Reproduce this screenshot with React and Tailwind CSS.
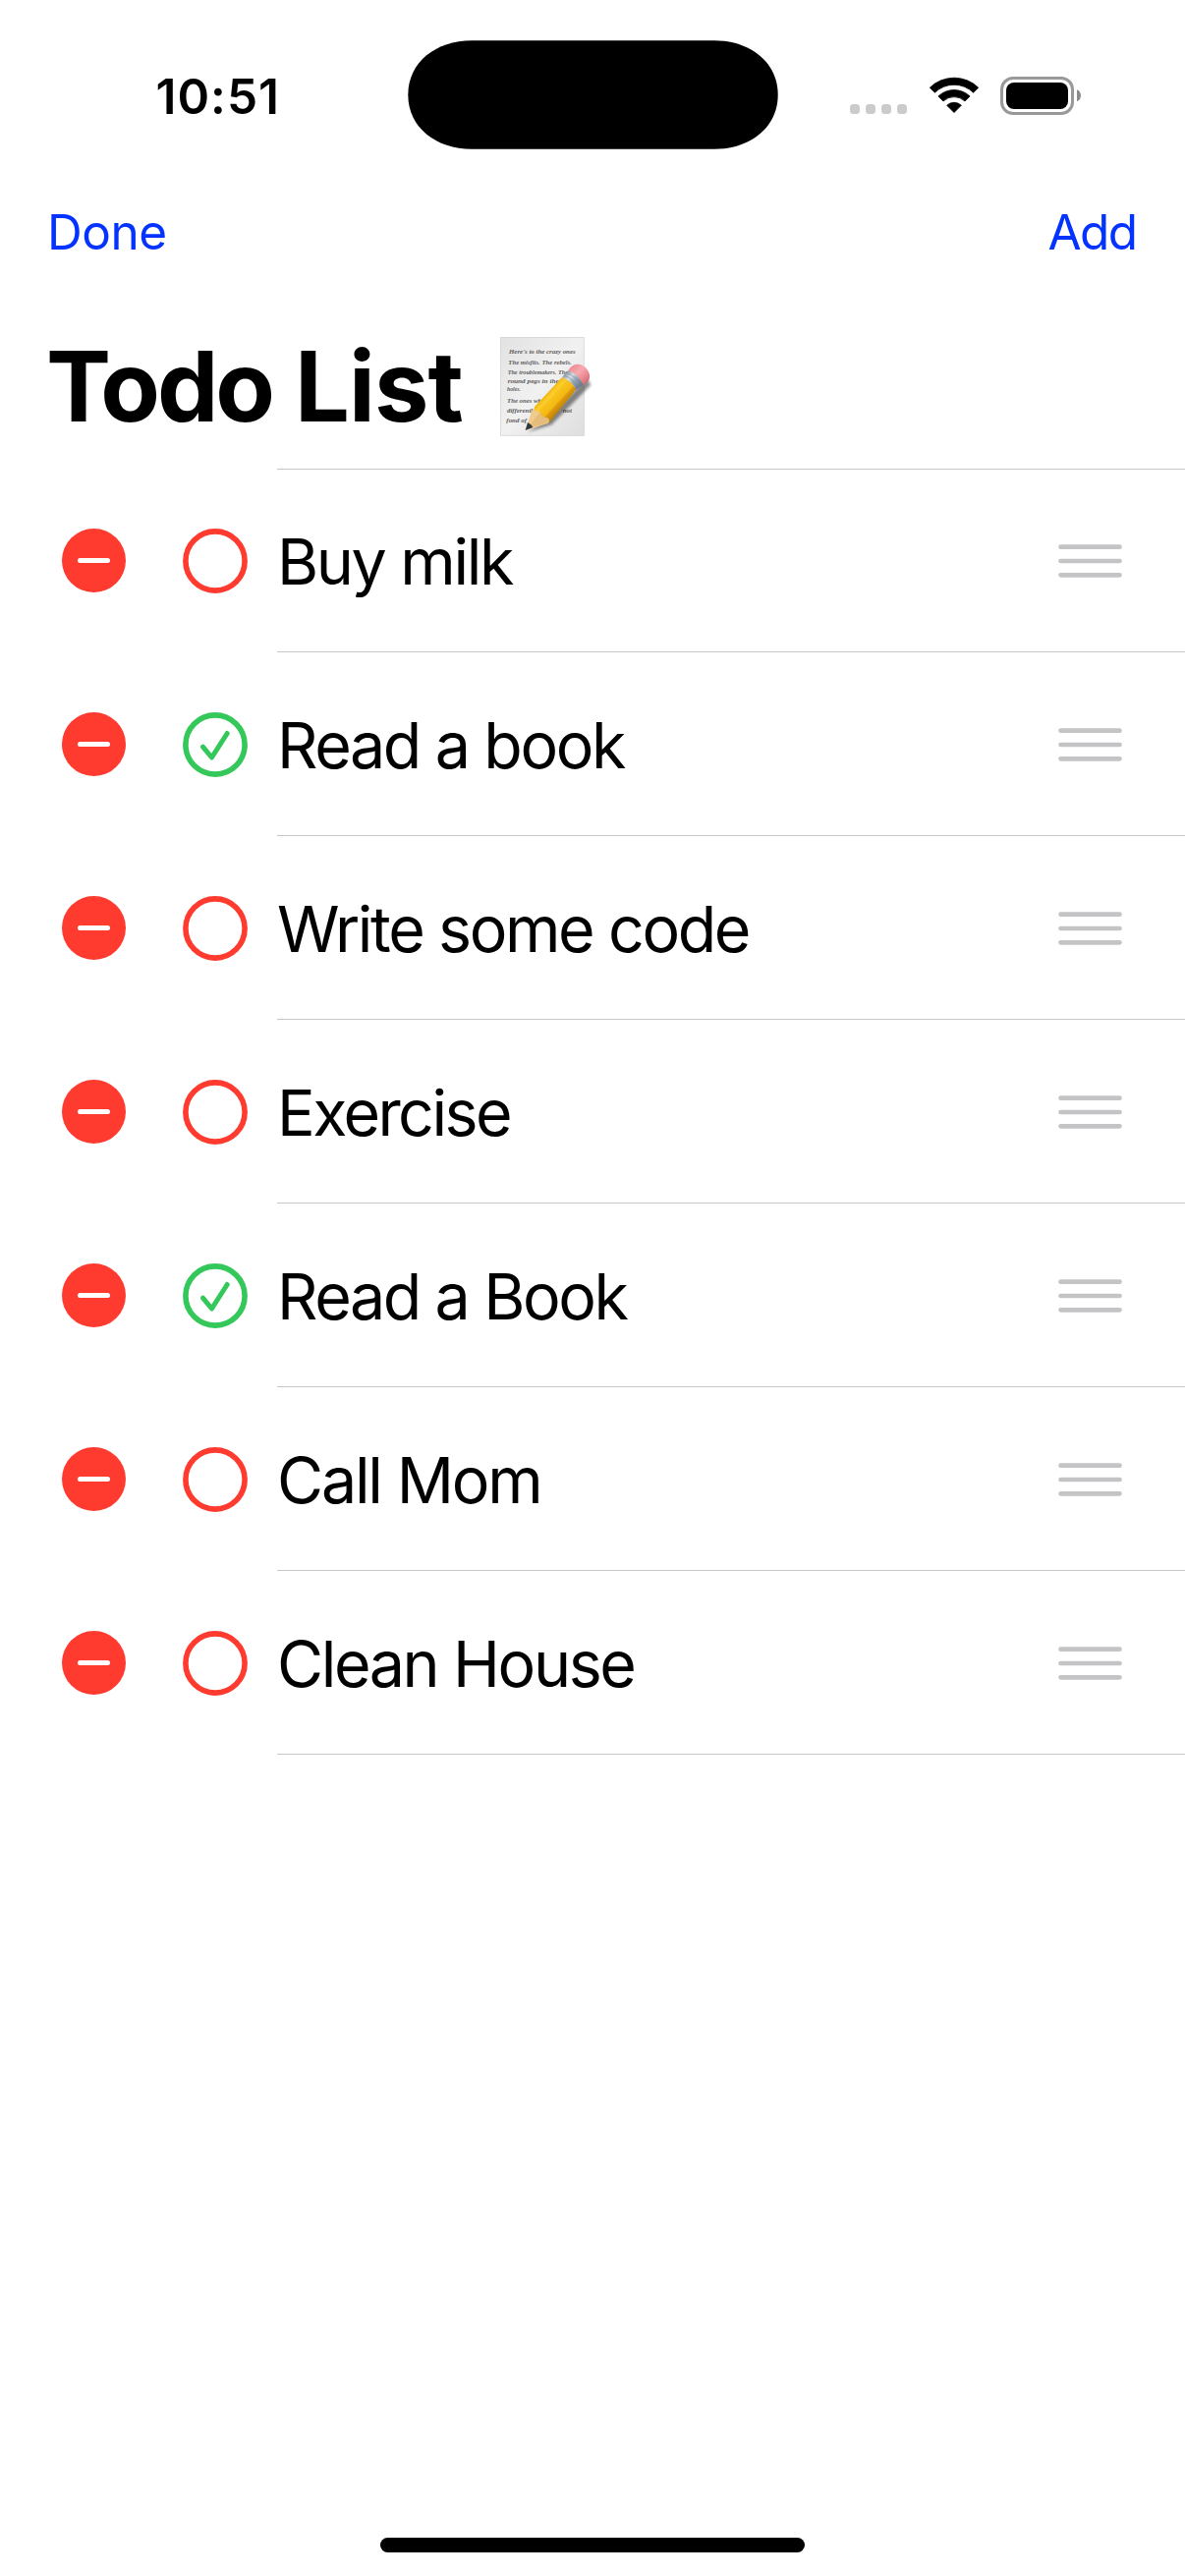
import React from "react";

const todos = [
  { title: "Buy milk", done: false, width: 239 },
  { title: "Read a book", done: true, width: 353 },
  { title: "Write some code", done: false, width: 480 },
  { title: "Exercise", done: false, width: 237 },
  { title: "Read a Book", done: true, width: 355.5 },
  { title: "Call Mom", done: false, width: 268.5 },
  { title: "Clean House", done: false, width: 363.5 },
];

function DynamicIsland() {
  return (
    <svg className="block h-[111px] w-[377px]" viewBox="0 0 377 111">
      <path d="M65 0.3H312C348 0.3 376.7 22 376.7 55.5S348 110.7 312 110.7H65C29 110.7 0.3 89 0.3 55.5S29 0.3 65 0.3Z" fill="#000" />
    </svg>
  );
}

function WifiIcon() {
  return (
    <svg className="block h-[38px] w-[52px]" viewBox="0 0 52 38">
      <path d="M1.3 11.2A35.5 35.5 0 0 1 50.7 11.2L45.6 16.2A28.3 28.3 0 0 0 6.4 16.2Z" fill="#000" stroke="#000" strokeWidth="0.8" strokeLinejoin="round" />
      <path d="M9.9 20A23.3 23.3 0 0 1 42.1 20L37 25A16 16 0 0 0 15 25Z" fill="#000" stroke="#000" strokeWidth="0.8" strokeLinejoin="round" />
      <path d="M18.7 29.2A10.6 10.6 0 0 1 33.3 29.2L26 36.6Z" fill="#000" stroke="#000" strokeWidth="0.8" strokeLinejoin="round" />
    </svg>
  );
}

function BatteryIcon() {
  return (
    <svg className="block h-[39px] w-[83px]" viewBox="0 0 83 39">
      <rect x="1.5" y="1.5" width="72" height="36" rx="11.5" fill="none" stroke="#999" strokeWidth="3" />
      <rect x="6" y="6" width="63" height="27" rx="8" fill="#000" />
      <path d="M78 13.3C80.6 14.4 82 16.6 82 19.3S80.6 24.3 78 25.3Z" fill="#8c8c8c" />
    </svg>
  );
}

const note = [
  ["Here's to the crazy ones", 84, 104, 203],
  ["The misfits. The rebels.", 82, 137, 194],
  ["The troublemakers. The", 80, 169, 184],
  ["round pegs in the", 80, 195, 156],
  ["holes.", 78, 220, 42],
  ["The ones who", 78, 254, 116],
  ["differently", 78, 284, 88],
  ["not", 248, 284, 28],
  ["fond of", 76, 316, 62],
];

function MemoEmoji() {
  return (
    <svg className="block h-[130px] w-[130px]" viewBox="0 0 390 390" role="img" aria-label="memo">
      <defs>
        <linearGradient id="paper" x1="0" y1="0" x2="1" y2="1">
          <stop offset="0" stopColor="#e2e2e2" />
          <stop offset="0.5" stopColor="#f1f1f1" />
          <stop offset="1" stopColor="#dedede" />
        </linearGradient>
        <linearGradient id="body" gradientUnits="userSpaceOnUse" x1="198" y1="218" x2="250" y2="266">
          <stop offset="0" stopColor="#e9a80c" />
          <stop offset="0.2" stopColor="#f7c41c" />
          <stop offset="0.3" stopColor="#fbd02f" />
          <stop offset="0.38" stopColor="#f8c21d" />
          <stop offset="0.68" stopColor="#f5b913" />
          <stop offset="0.76" stopColor="#dc9a0d" />
          <stop offset="1" stopColor="#bf8209" />
        </linearGradient>
        <linearGradient id="metal" gradientUnits="userSpaceOnUse" x1="254" y1="165" x2="303" y2="211">
          <stop offset="0" stopColor="#8794a1" />
          <stop offset="0.3" stopColor="#d6dee5" />
          <stop offset="0.55" stopColor="#9aa9b8" />
          <stop offset="1" stopColor="#65717e" />
        </linearGradient>
        <linearGradient id="eraser" gradientUnits="userSpaceOnUse" x1="278" y1="145" x2="326" y2="194">
          <stop offset="0" stopColor="#ee9099" />
          <stop offset="0.35" stopColor="#f7aab0" />
          <stop offset="0.7" stopColor="#e98791" />
          <stop offset="1" stopColor="#c96670" />
        </linearGradient>
        <filter id="soft" x="-20%" y="-20%" width="140%" height="140%">
          <feGaussianBlur stdDeviation="4" />
        </filter>
      </defs>
      <rect x="57" y="54" width="257" height="302" fill="url(#paper)" />
      <rect x="58.5" y="55.5" width="254" height="299" fill="none" stroke="#d2d2d2" strokeWidth="2" />
      <g fill="#5e5e5e" fontFamily="'Liberation Serif', serif" fontStyle="italic" fontSize="20">
        {note.map(([text, x, y, w]) => (
          <text key={text} x={x} y={y} textLength={w} lengthAdjust="spacingAndGlyphs">{text}</text>
        ))}
      </g>
      <path d="M142 344L214 322L334 200L322 180L206 300Z" fill="#000" opacity="0.45" filter="url(#soft)" />
      <path d="M134 339L153 281Q158 270 167 266L205 296Q211 309 203 318Z" fill="#efcb8c" />
      <path d="M142 331L178 285L204 300Q209 310 203 318Z" fill="#dcb06f" opacity="0.55" />
      <path d="M134 339L141 315Q152 319 157 330Z" fill="#333940" />
      <path d="M162 267L246 177Q275 188 289 214L207 316Q208 301 198 300Q188 300 183 291Q180 281 171 281Q160 279 162 267Z" fill="url(#body)" />
      <path d="M246 177L265 156Q297 165 312 199L289 216Q276 187 246 177Z" fill="url(#metal)" />
      <path d="M252 171Q282 182 296 210M259 163Q290 174 305 204" fill="none" stroke="#6f7f90" strokeWidth="2" opacity="0.75" />
      <path d="M265 157Q271 143 286 138Q307 134 321 151Q335 168 328 185Q323 195 311 200Q298 169 265 157Z" fill="url(#eraser)" />
    </svg>
  );
}

function DeleteButton() {
  return (
    <button className="flex size-[65px] shrink-0 items-center justify-center rounded-full bg-[#ff3b30]" aria-label="Delete">
      <span className="h-[5px] w-[33px] rounded-full bg-white" />
    </button>
  );
}

function Status({ done }) {
  return (
    <svg className="block size-[66px] shrink-0" viewBox="-33 -33 66 66">
      <circle r="30.1" fill="none" stroke={done ? "#34c759" : "#ff3b30"} strokeWidth="5.6" />
      {done && <path d="M-12.5 2.2L-3.5 13L12.2 -11.5" fill="none" stroke="#34c759" strokeWidth="5" strokeLinecap="round" strokeLinejoin="round" />}
    </svg>
  );
}

function Handle() {
  return (
    <svg className="mt-px block h-[34px] w-[65px] shrink-0" viewBox="0 0 65 34">
      <path d="M2.5 2.7H62.5M2.5 17H62.5M2.5 31.3H62.5" stroke="#c4c4c6" strokeWidth="4.7" strokeLinecap="round" />
    </svg>
  );
}

// Sets a label to a fixed advance width by spreading its letters evenly.
function FittedText({ children, width }) {
  const ref = React.useRef(null);
  const [spacing, setSpacing] = React.useState(0);
  React.useLayoutEffect(() => {
    const natural = ref.current.getBoundingClientRect().width;
    setSpacing((s) => s + (width - natural) / children.length);
  }, [width, children]);
  return (
    <span ref={ref} className="inline-block whitespace-pre" style={{ letterSpacing: spacing + "px" }}>
      {children}
    </span>
  );
}

export default function App() {
  return (
    <div className="flex h-[2622px] w-[1206px] flex-col overflow-hidden bg-white font-['Inter',sans-serif] text-black">
      <header className="flex h-[177px] items-start">
        <div className="w-[414px] pt-[68px] pl-[158.5px] text-[49.5px] leading-[60px] font-semibold">
          <FittedText width={126.5}>10:51</FittedText>
        </div>
        <div className="pt-[41px] pl-[0.5px]">
          <DynamicIsland />
        </div>
        <div className="flex items-start pt-[78px] pl-[73.5px]">
          <div className="mt-[28px] flex gap-[6px]">
            {[0, 1, 2, 3].map((i) => (
              <span key={i} className="size-[10px] rounded-[3.5px] bg-[#cbcbcb]" />
            ))}
          </div>
          <div className="ml-[21.5px]">
            <WifiIcon />
          </div>
          <div className="ml-[21px]">
            <BatteryIcon />
          </div>
        </div>
      </header>

      <nav className="flex h-[132px] justify-between pt-[29px] pr-[49.5px] pl-[48px] text-[49.5px] leading-[60px] text-[#0433ff]">
        <FittedText width={121.5}>Done</FittedText>
        <FittedText width={90}>Add</FittedText>
      </nav>

      <h1 className="flex h-[168px] items-start pl-[47px] text-[99px] leading-[120px] font-bold">
        <div className="flex w-[443px] gap-[23px] pt-[24px]">
          <FittedText width={230}>Todo</FittedText>
          <FittedText width={171}>List</FittedText>
        </div>
        <div className="pt-[16px]">
          <MemoEmoji />
        </div>
      </h1>

      <ul>
        {todos.map((todo, i) => (
          <li key={i} className="group flex h-[187px] items-center pl-[63px]">
            <DeleteButton />
            <div className="ml-[57.5px]">
              <Status done={todo.done} />
            </div>
            <div className="ml-[30.5px] flex h-full flex-1 items-center justify-between border-b border-[#c6c6c8] pr-[64px] group-first:border-t">
              <span className="pt-[3.5px] text-[64.5px] leading-[78px]">
                <FittedText width={todo.width}>{todo.title}</FittedText>
              </span>
              <Handle />
            </div>
          </li>
        ))}
      </ul>

      <footer className="mt-auto flex justify-center pb-[24px]">
        <div className="h-[15px] w-[432px] rounded-full bg-black" />
      </footer>
    </div>
  );
}
